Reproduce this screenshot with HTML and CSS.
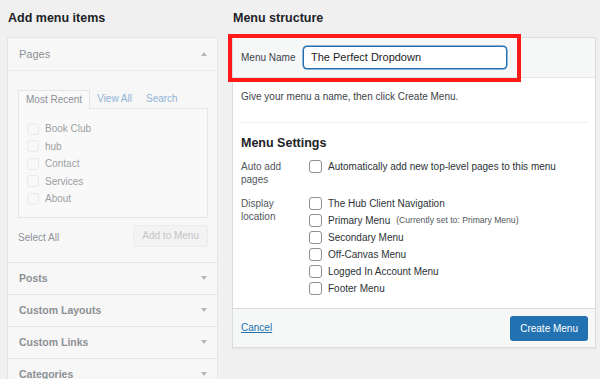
FILE: index.html
```html
<!DOCTYPE html>
<html lang="en">
<head>
<meta charset="utf-8">
<title>Menus</title>
<link rel="stylesheet" href="styles.css">
</head>
<body>
<div class="page">
  <section class="col">
    <h2 class="col-title">Add menu items</h2>
    <div class="accordion">
      <div class="acc-section">
        <div class="acc-head"><span>Pages</span><span class="arrow up"></span></div>
        <div class="acc-body">
          <div class="tabs">
            <span class="tab active">Most Recent</span>
            <span class="tab link">View All</span>
            <span class="tab link">Search</span>
          </div>
          <div class="tab-panel">
            <div class="item"><span class="cb faded"></span>Book Club</div>
            <div class="item"><span class="cb faded"></span>hub</div>
            <div class="item"><span class="cb faded"></span>Contact</div>
            <div class="item"><span class="cb faded"></span>Services</div>
            <div class="item"><span class="cb faded"></span>About</div>
          </div>
          <div class="actions">
            <span class="select-all">Select All</span>
            <span class="btn-disabled">Add to Menu</span>
          </div>
        </div>
      </div>
      <div class="acc-section"><div class="acc-head"><span>Posts</span><span class="arrow down"></span></div></div>
      <div class="acc-section"><div class="acc-head"><span>Custom Layouts</span><span class="arrow down"></span></div></div>
      <div class="acc-section"><div class="acc-head"><span>Custom Links</span><span class="arrow down"></span></div></div>
      <div class="acc-section"><div class="acc-head"><span>Categories</span><span class="arrow down"></span></div></div>
    </div>
  </section>

  <section class="col">
    <h2 class="col-title">Menu structure</h2>
    <div class="panel">
      <div class="highlight"></div>
      <div class="panel-head">
        <span class="name-label">Menu Name</span>
        <span class="name-input">The Perfect Dropdown</span>
      </div>
      <div class="panel-body">
        <p class="hint">Give your menu a name, then click Create Menu.</p>
        <div class="sep"></div>
        <h3 class="settings-title">Menu Settings</h3>
        <div class="setting">
          <div class="setting-label">Auto add pages</div>
          <div class="setting-opts">
            <div class="opt"><span class="cb"></span>Automatically add new top-level pages to this menu</div>
          </div>
        </div>
        <div class="setting setting-loc">
          <div class="setting-label">Display location</div>
          <div class="setting-opts">
            <div class="opt"><span class="cb"></span>The Hub Client Navigation</div>
            <div class="opt"><span class="cb"></span>Primary Menu <span class="note">(Currently set to: Primary Menu)</span></div>
            <div class="opt"><span class="cb"></span>Secondary Menu</div>
            <div class="opt"><span class="cb"></span>Off-Canvas Menu</div>
            <div class="opt"><span class="cb"></span>Logged In Account Menu</div>
            <div class="opt"><span class="cb"></span>Footer Menu</div>
          </div>
        </div>
      </div>
      <div class="panel-foot">
        <span class="cancel">Cancel</span>
        <span class="btn-primary">Create Menu</span>
      </div>
    </div>
  </section>
</div>
</body>
</html>
```

FILE: styles.css
```css
* { box-sizing: border-box; }
html, body { margin: 0; padding: 0; }
body {
  background: #f0f0f1;
  font-family: "Liberation Sans", Arial, sans-serif;
  font-size: 10px;
  color: #3c434a;
  overflow: hidden;
  height: 379px;
}
.page {
  display: grid;
  grid-template-columns: 211px 364px;
  column-gap: 14px;
  padding: 0 4px 0 7px;
  align-items: start;
}
.col-title {
  margin: 0 0 0 1px;
  height: 37px;
  line-height: 37px;
  font-size: 12.5px;
  font-weight: bold;
  color: #1d2327;
}

/* left accordion (disabled look) */
.accordion {
  border: 1px solid #e6e6e7;
  border-bottom: 0;
  background: #f7f7f7;
}
.acc-section + .acc-section { border-top: 1px solid #e6e6e7; }
.acc-head {
  height: 32px;
  display: flex;
  align-items: center;
  justify-content: space-between;
  padding: 0 10px 0 11px;
  font-size: 10.5px;
  font-weight: bold;
  color: #8d9094;
}
.acc-section:first-child .acc-head {
  height: 33px;
  border-bottom: 1px solid #ececec;
  font-weight: normal;
  font-size: 11px;
}
.acc-section + .acc-section .acc-head { height: 31px; }
.arrow {
  width: 0; height: 0;
  border-left: 3px solid transparent;
  border-right: 3px solid transparent;
}
.arrow.up { border-bottom: 4px solid #b4b6b9; }
.arrow.down { border-top: 4px solid #b4b6b9; }

.acc-body { padding: 19px 9px 15px 10px; }
.tabs { display: flex; height: 18px; }
.tab {
  padding: 0 7px;
  line-height: 17px;
  color: #8fb4d5;
}
.tab.active {
  color: #8c8f94;
  background: #f9f9f9;
  border: 1px solid #e6e6e7;
  border-bottom: 0;
  position: relative;
  z-index: 1;
  margin-bottom: -1px;
  height: 19px;
}
.tab-panel {
  border: 1px solid #e6e6e7;
  background: #f9f9f9;
  padding: 11px 8px 9px;
}
.item {
  height: 17.5px;
  display: flex;
  align-items: center;
  gap: 6px;
  color: #9c9fa3;
}
.cb {
  width: 13px;
  height: 13px;
  border: 1px solid #8c8f94;
  border-radius: 3px;
  background: #fff;
  flex: none;
}
.cb.faded {
  width: 12px;
  height: 12px;
  border-color: #eaeaea;
  background: #f8f8f8;
}
.actions {
  margin-top: 7px;
  display: flex;
  align-items: center;
  justify-content: space-between;
}
.select-all { color: #909397; margin-top: 3px; }
.btn-disabled {
  height: 22px;
  line-height: 20px;
  padding: 0 8px;
  border: 1px solid #ececec;
  background: #f3f3f3;
  border-radius: 3px;
  color: #c4c5c7;
}

/* right panel */
.panel {
  position: relative;
  border: 1px solid #dcdcde;
  background: #fff;
  box-shadow: 0 1px 1px rgba(0,0,0,0.04);
}
.highlight {
  position: absolute;
  left: -5px;
  top: -4px;
  width: 293px;
  height: 48px;
  border: 4px solid #ff1a1a;
  pointer-events: none;
  z-index: 2;
}
.panel-head {
  background: #f6f7f7;
  border-bottom: 1px solid #e4e5e7;
  padding: 8px 8px 8px 8px;
  display: flex;
  align-items: center;
}
.name-label { width: 62px; color: #3c434a; }
.name-input {
  width: 204px;
  height: 23px;
  line-height: 21px;
  padding: 0 7px;
  border: 1px solid #2271b1;
  box-shadow: 0 0 0 0.5px #2271b1;
  border-radius: 4px;
  background: #fff;
  color: #1d2327;
  font-size: 11px;
}
.panel-body { padding: 0 7px 11px 8px; }
.hint {
  margin: 12px 0 0;
  line-height: 14px;
  color: #3c434a;
}
.sep {
  margin-top: 18px;
  border-top: 1px solid #f0f0f1;
}
.settings-title {
  margin: 12px 0 0;
  line-height: 16px;
  font-size: 12.5px;
  font-weight: bold;
  color: #1d2327;
}
.setting { display: flex; margin-top: 6.5px; }
.setting-loc { margin-top: 9px; }
.setting-label {
  width: 68px;
  padding-top: 2px;
  line-height: 13px;
  color: #50575e;
  padding-right: 14px;
}
.opt {
  height: 17px;
  display: flex;
  align-items: center;
  gap: 6px;
  color: #2c3338;
  white-space: nowrap;
}
.note { font-size: 8.6px; color: #50575e; margin-left: 0; }
.panel-foot {
  background: #f6f7f7;
  border-top: 1px solid #dcdcde;
  padding: 7px 7px 6px 8px;
  display: flex;
  align-items: center;
  justify-content: space-between;
}
.cancel {
  color: #2271b1;
  text-decoration: underline;
  margin-top: -1px;
}
.btn-primary {
  height: 25px;
  line-height: 25px;
  padding: 0 10px;
  background: #2271b1;
  color: #fff;
  border-radius: 3px;
}
```
